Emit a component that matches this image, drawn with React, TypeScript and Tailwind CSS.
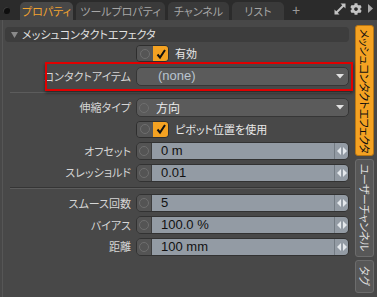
import { FaCog } from "react-icons/fa";

const jp = "font-['Noto_Sans_CJK_JP',sans-serif] [font-feature-settings:'palt']";
const latin = "font-['Liberation_Sans',Arial,sans-serif]";
const vtab =
  "flex w-[19px] items-center justify-start overflow-hidden whitespace-nowrap rounded-[3px] border text-[11px] leading-[17px] [writing-mode:vertical-rl] [text-orientation:sideways]";

function Ring() {
  return <span className="block h-[10px] w-[10px] rounded-full border border-[#6e6e6e]" />;
}

function DownArrow() {
  return (
    <svg width="8" height="5" viewBox="0 0 8 5">
      <polygon points="0,0 8,0 4,4.5" fill="#e2e2e2" />
    </svg>
  );
}

function Spinner() {
  return (
    <svg width="10" height="8" viewBox="0 0 10 8">
      <polygon points="0,4 4,0 4,8" fill="#e4e8ec" />
      <polygon points="6,0 10,4 6,8" fill="#e4e8ec" />
    </svg>
  );
}

function Label({ text }: { text?: string }) {
  return <div className={`w-[128px] text-right text-[11px] text-[#d6d6d6] ${jp}`}>{text}</div>;
}

function CheckRow({ label, h }: { label: string; h: string }) {
  return (
    <div className={`flex items-center ${h}`}>
      <Label />
      <div className="ml-[5px] flex h-[17px] w-[33px] overflow-hidden rounded-[4px] border border-[#2e2e2e]">
        <div className="flex w-[16px] items-center justify-center bg-[#555555]">
          <Ring />
        </div>
        <div className="flex flex-1 items-center justify-center bg-[#f4a222]">
          <svg width="12" height="12" viewBox="0 0 12 12">
            <path d="M2.5 6.5 L5 9.5 L10 2" stroke="#111" strokeWidth="2" fill="none" />
          </svg>
        </div>
      </div>
      <span className={`ml-[6px] text-[11px] text-[#e8e8e8] ${jp}`}>{label}</span>
    </div>
  );
}

function FieldRow({ label, value, h }: { label: string; value: string; h: string }) {
  return (
    <div className={`flex items-center ${h}`}>
      <Label text={label} />
      <div className="ml-[5px] flex h-[18px] w-[213px] overflow-hidden rounded-[5px] border border-[#323232]">
        <div className="flex w-[15px] items-center justify-center border-r border-[#3c3c3c] bg-[#545454]">
          <Ring />
        </div>
        <div className={`flex flex-1 items-center bg-[#939ba4] pl-[9px] text-[13px] text-[#111] ${latin}`}>{value}</div>
        <div className="flex w-[14px] items-center justify-center border-l border-[#737b83] bg-[#939ba4]">
          <Spinner />
        </div>
      </div>
    </div>
  );
}

function Divider({ double }: { double?: boolean }) {
  return (
    <div className="flex h-[9px] items-center pl-[7px]">
      <div className="w-[340px]">
        {double && <div className="h-px bg-[#353535]" />}
        <div className="h-px bg-[#5c5c5c]" />
      </div>
    </div>
  );
}

const tabs = [
  { t: "ツールプロパティ", w: "w-[89px]" },
  { t: "チャンネル", w: "w-[61px]" },
  { t: "リスト", w: "w-[52px]" },
];

export default function App() {
  return (
    <div className="flex h-[297px] w-[377px] flex-col overflow-hidden bg-[#484848]">
      <div className="flex h-[20px] items-end bg-[#2b2b2b]">
        <span className="mb-[6px] ml-[3px] h-[7px] w-[7px] rounded-full bg-[#0e0e0e] shadow-[inset_1px_1px_0_#3a3a3a]" />
        <div className="ml-[10px] flex gap-[3px]">
          <div className={`flex h-[18px] w-[53px] items-center justify-center rounded-t-[5px] bg-[#484848] text-[11px] text-[#f2a330] ${jp}`}>
            プロパティ
          </div>
          {tabs.map((tab) => (
            <div key={tab.t} className={`flex h-[18px] ${tab.w} items-center justify-center rounded-t-[5px] bg-[#3a3a3a] text-[11px] text-[#a6a6a6] ${jp}`}>
              {tab.t}
            </div>
          ))}
        </div>
        <span className={`mb-[2px] ml-[8px] text-[14px] leading-[16px] text-[#9a9a9a] ${latin}`}>+</span>
        <div className="mb-[3px] ml-auto mr-[3px] flex items-center gap-[4px] self-center">
          <svg width="12" height="12" viewBox="0 0 12 12">
            <polygon points="6.5,0.5 11.5,0.5 11.5,5.5" fill="#c4c4c4" />
            <polygon points="0.5,6.5 0.5,11.5 5.5,11.5" fill="#c4c4c4" />
            <path d="M2.5 9.5 L9.5 2.5" stroke="#c4c4c4" strokeWidth="2" />
          </svg>
          <FaCog size={12} color="#c4c4c4" />
          <svg width="6" height="9" viewBox="0 0 6 9" className="ml-[2px]">
            <polygon points="0,0 5,4.5 0,9" fill="#a8a8a8" />
          </svg>
        </div>
      </div>

      <div className="flex flex-1">
        <div className="ml-[2px] flex w-[350px] flex-col border-l border-[#565656]">
          <div className="ml-[2px] mt-[7px] flex h-[15px] w-[344px] items-center rounded-[4px] bg-[#3d3d3d]">
            <svg width="7" height="6" viewBox="0 0 7 6" className="ml-[6px]">
              <polygon points="0,0 7,0 3.5,6" fill="#8a8a8a" />
            </svg>
            <span className={`ml-[4px] text-[11px] text-[#e2e2e2] ${jp}`}>メッシュコンタクトエフェクタ</span>
          </div>

          <div className="mt-px" />
          <CheckRow label="有効" h="h-[21px]" />

          <div className="relative flex h-[24px] items-center">
            <Label text="コンタクトアイテム" />
            <div className="ml-[5px] flex h-[19px] w-[213px] items-center rounded-[5px] border border-[#363636] bg-[#5b5b5b]">
              <span className={`ml-[21px] text-[13px] text-[#b9c4cf] ${latin}`}>(none)</span>
              <span className="ml-auto mr-[4px] flex">
                <DownArrow />
              </span>
            </div>
            <div className="absolute left-[42px] top-[-2px] h-[29px] w-[308px] border-2 border-[#e00000] shadow-[0_2px_3px_rgba(0,0,0,0.45)]" />
          </div>

          <Divider />

          <div className="flex h-[21px] items-center">
            <Label text="伸縮タイプ" />
            <div className="ml-[5px] flex h-[19px] w-[213px] items-center rounded-[5px] border border-[#363636] bg-[#5b5b5b]">
              <span className="ml-[2px]">
                <Ring />
              </span>
              <span className={`ml-[7px] text-[12px] text-[#ececec] ${jp}`}>方向</span>
              <span className="ml-auto mr-[4px] flex">
                <DownArrow />
              </span>
            </div>
          </div>

          <CheckRow label="ピボット位置を使用" h="h-[22px]" />
          <FieldRow label="オフセット" value="0 m" h="h-[22px]" />
          <FieldRow label="スレッショルド" value="0.01" h="h-[21px]" />

          <Divider double />

          <FieldRow label="スムース回数" value="5" h="h-[22px]" />
          <FieldRow label="バイアス" value="100.0 %" h="h-[22px]" />
          <FieldRow label="距離" value="100 mm" h="h-[21px]" />
        </div>

        <div className="flex flex-1 flex-col gap-[3px] pl-[3px] pt-[5px]">
          <div className={`h-[131px] border-[#b87512] bg-[#f4a222] pt-[3px] tracking-[-0.7px] text-[#111] ${jp} ${vtab}`}>
            メッシュコンタクトエフェクタ
          </div>
          <div className={`h-[98px] border-[#6c6c6c] bg-[#575757] pt-[4px] tracking-[-0.6px] text-[#dedede] ${jp} ${vtab}`}>
            ユーザーチャンネル
          </div>
          <div className={`h-[33px] border-[#6c6c6c] bg-[#575757] pt-[5px] text-[#dedede] ${jp} ${vtab}`}>
            タグ
          </div>
        </div>
      </div>
    </div>
  );
}
